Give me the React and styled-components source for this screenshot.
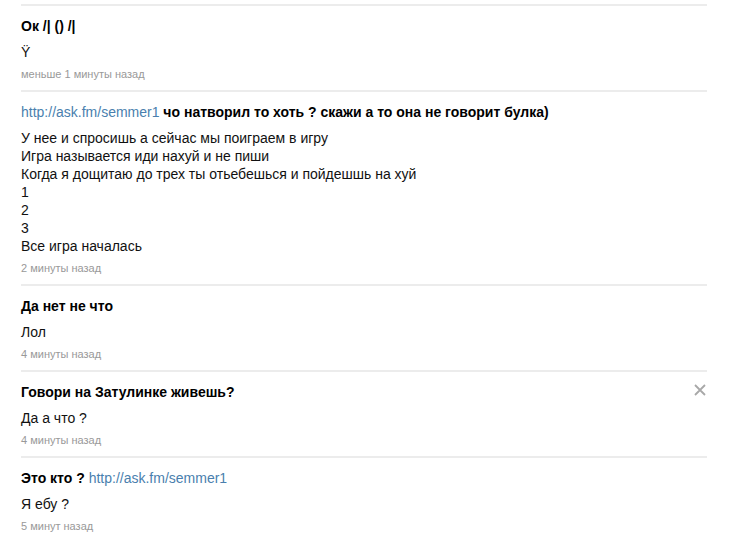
import React from 'react'
import styled, { createGlobalStyle } from 'styled-components'

const GlobalStyle = createGlobalStyle`
  body {
    margin: 0;
    background: #fff;
    font-family: "Liberation Sans", Arial, sans-serif;
    color: #000;
  }
`

const answers = [
  {
    id: 1,
    question: [{ text: 'Ок /| () /|' }],
    body: ['Ÿ'],
    time: 'меньше 1 минуты назад'
  },
  {
    id: 2,
    question: [
      { link: 'http://ask.fm/semmer1' },
      { text: ' чо натворил то хоть ? скажи а то она не говорит булка)' }
    ],
    body: [
      'У нее и спросишь а сейчас мы поиграем в игру',
      'Игра называется иди нахуй и не пиши',
      'Когда я дощитаю до трех ты отьебешься и пойдешшь на хуй',
      '1',
      '2',
      '3',
      'Все игра началась'
    ],
    time: '2 минуты назад'
  },
  {
    id: 3,
    question: [{ text: 'Да нет не что' }],
    body: ['Лол'],
    time: '4 минуты назад'
  },
  {
    id: 4,
    question: [{ text: 'Говори на Затулинке живешь?' }],
    body: ['Да а что ?'],
    time: '4 минуты назад',
    removable: true
  },
  {
    id: 5,
    question: [{ text: 'Это кто ? ' }, { link: 'http://ask.fm/semmer1' }],
    body: ['Я ебу ?'],
    time: '5 минут назад'
  }
]

const App = () => (
  <>
    <GlobalStyle />
    <Feed>
      {answers.map(answer => (
        <Answer key={answer.id}>
          <Question>
            {answer.question.map((part, i) =>
              part.link
                ? <Link key={i} href={part.link}>{part.link}</Link>
                : <span key={i}>{part.text}</span>
            )}
          </Question>
          <Body>
            {answer.body.map((line, i) => <div key={i}>{line}</div>)}
          </Body>
          <Time>{answer.time}</Time>
          {answer.removable && (
            <Close aria-label="Удалить">
              <svg width="12" height="12" viewBox="0 0 12 12">
                <path d="M1 1 L11 11 M11 1 L1 11" stroke="#a8a8a8" strokeWidth="1.8" />
              </svg>
            </Close>
          )}
        </Answer>
      ))}
    </Feed>
  </>
)

const Feed = styled.div`
  margin: 4px 0 0 21px;
  width: 686px;
`

const Answer = styled.div`
  position: relative;
  border-top: 2px solid #ececec;
  padding: 11px 0 9px;
`

const Question = styled.div`
  font-size: 14px;
  line-height: 18px;
  font-weight: bold;
  color: #000;
`

const Link = styled.a`
  font-weight: normal;
  color: #4a7fae;
  text-decoration: none;
`

const Body = styled.div`
  margin-top: 8px;
  font-size: 14px;
  line-height: 18px;
  color: #111;
`

const Time = styled.div`
  margin-top: 6px;
  font-size: 11px;
  line-height: 14px;
  color: #999;
`

const Close = styled.button`
  position: absolute;
  top: 12px;
  right: 1px;
  padding: 0;
  border: 0;
  background: none;
  cursor: pointer;
  display: flex;
`

export default App
